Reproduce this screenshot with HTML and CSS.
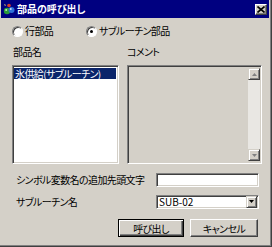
FILE: index.html
```html
<!DOCTYPE html>
<html lang="ja">
<head>
    <meta charset="UTF-8">
    <title>部品の呼び出し</title>
    <link rel="stylesheet" href="styles.css">
</head>
<body>
    <div class="window">
        <div class="caption">
            <svg class="app-icon" width="12" height="12" viewBox="0 0 12 12">
                <circle cx="4" cy="8" r="3.2" fill="#2a9a3a"/>
                <circle cx="8.5" cy="7" r="3" fill="#2e6fd8"/>
                <circle cx="6" cy="2.5" r="1.8" fill="#d83a2a"/>
                <path d="M2 1 L3 3 L1 2 Z" fill="#ffe060"/>
                <circle cx="3.2" cy="7" r="1" fill="#bff0b0"/>
                <circle cx="7.8" cy="6" r="0.9" fill="#c8e0ff"/>
            </svg>
            <span class="caption-text">部品の呼び出し</span>
            <span class="close-btn">
                <svg width="8" height="7" viewBox="0 0 8 7">
                    <path d="M0.5 0.5 L7.5 6.5 M7.5 0.5 L0.5 6.5" stroke="#000" stroke-width="1.6"/>
                </svg>
            </span>
        </div>

        <div class="content">
            <div class="radio-row">
                <label class="radio first"><span class="radio-dot"></span>行部品</label>
                <label class="radio checked"><span class="radio-dot"></span>サブルーチン部品</label>
            </div>

            <div class="panes">
                <div class="pane-label list-label">部品名</div>
                <div class="pane-label">コメント</div>
                <div class="listbox sunken">
                    <div class="list-item selected">氷供給(サブルーチン)</div>
                </div>
                <div class="memo sunken">
                    <div class="memo-area"></div>
                    <div class="vscroll">
                        <span class="sb-btn">
                            <svg width="5" height="3" viewBox="0 0 5 3"><path d="M2.5 0 L5 3 L0 3 Z" fill="#808080"/></svg>
                        </span>
                        <span class="sb-track"></span>
                        <span class="sb-btn">
                            <svg width="5" height="3" viewBox="0 0 5 3"><path d="M0 0 L5 0 L2.5 3 Z" fill="#808080"/></svg>
                        </span>
                    </div>
                </div>
            </div>

            <div class="field-row first-field">
                <span class="field-label">シンボル変数名の追加先頭文字</span>
                <div class="edit sunken"></div>
            </div>
            <div class="field-row">
                <span class="field-label">サブルーチン名</span>
                <div class="combo sunken">
                    <span class="combo-value">SUB-02</span>
                    <span class="combo-btn">
                        <svg width="5" height="3" viewBox="0 0 5 3"><path d="M0 0 L5 0 L2.5 3 Z" fill="#000"/></svg>
                    </span>
                </div>
            </div>

            <div class="button-row">
                <button type="button" class="btn default">呼び出し</button>
                <button type="button" class="btn cancel">キャンセル</button>
            </div>
        </div>
    </div>
</body>
</html>
```

FILE: styles.css
```css
* {
    box-sizing: border-box;
}
body {
    margin: 0;
    background-color: #d4d0c8;
    font-family: "Noto Sans CJK JP", "Noto Sans", sans-serif;
    font-size: 10px;
    font-feature-settings: "palt";
    color: #000;
}
.window {
    width: 272px;
    height: 247px;
    padding: 0 2px 2px 1px;
    background-color: #d4d0c8;
    border-right: 1px solid #404040;
    border-bottom: 1px solid #404040;
    box-shadow: inset -1px -1px #808080;
}
.caption {
    display: flex;
    align-items: center;
    height: 18px;
    background-color: #000080;
    color: #fff;
}
.app-icon {
    margin-left: 2px;
    flex: none;
}
.caption-text {
    margin-left: 2px;
    font-weight: bold;
    line-height: 18px;
    flex: 1;
}
.close-btn {
    display: flex;
    align-items: center;
    justify-content: center;
    width: 12px;
    height: 11px;
    margin-right: 2px;
    background-color: #d4d0c8;
    border: 1px solid;
    border-color: #fff #404040 #404040 #fff;
    box-shadow: inset -1px -1px #808080;
}
.content {
    padding-left: 11px;
    letter-spacing: -0.6px;
}
.radio-row {
    display: flex;
    height: 12px;
    margin-top: 7px;
    line-height: 12px;
}
.radio {
    display: flex;
    align-items: center;
    gap: 2px;
}
.radio.first {
    width: 74px;
}
.radio-dot {
    position: relative;
    width: 11px;
    height: 11px;
    border-radius: 50%;
    background-color: #fff;
    border: 1px solid;
    border-color: #808080 #fff #fff #808080;
    box-shadow: inset 1px 1px #404040;
}
.radio.checked .radio-dot::after {
    content: "";
    position: absolute;
    left: 3px;
    top: 3px;
    width: 3px;
    height: 3px;
    border-radius: 50%;
    background-color: #000;
}
.panes {
    display: grid;
    grid-template-columns: 107px 135px;
    grid-template-rows: 12px 99px;
    column-gap: 8px;
    row-gap: 7px;
    margin-top: 9px;
}
.pane-label {
    line-height: 12px;
}
.list-label {
    padding-left: 1px;
}
.sunken {
    border: 1px solid;
    border-color: #808080 #fff #fff #808080;
    box-shadow: inset 1px 1px #404040, inset -1px -1px #d4d0c8;
}
.listbox {
    background-color: #fff;
    padding: 2px 2px 0 1px;
}
.list-item {
    height: 11px;
    line-height: 11px;
    padding-left: 1px;
    white-space: nowrap;
}
.list-item.selected {
    background-color: #0a246a;
    color: #fff;
}
.memo {
    display: flex;
    padding: 2px 1px 2px 2px;
    background-color: #d4d0c8;
}
.memo-area {
    flex: 1;
}
.vscroll {
    display: flex;
    flex-direction: column;
    width: 12px;
}
.sb-btn {
    display: flex;
    align-items: center;
    justify-content: center;
    height: 12px;
    background-color: #d4d0c8;
    border: 1px solid;
    border-color: #d4d0c8 #404040 #404040 #d4d0c8;
    box-shadow: inset 1px 1px #fff, inset -1px -1px #808080;
}
.sb-track {
    flex: 1;
    background-color: #e9e7e3;
}
.field-row {
    display: grid;
    grid-template-columns: 144px 103px;
    align-items: center;
    height: 14px;
    margin-top: 8px;
}
.field-label {
    padding-left: 4px;
    white-space: nowrap;
}
.edit,
.combo {
    height: 14px;
    background-color: #fff;
}
.combo {
    display: flex;
    align-items: center;
    padding: 1px 1px 1px 2px;
}
.combo-value {
    flex: 1;
    line-height: 12px;
    letter-spacing: 0;
}
.combo-btn {
    display: flex;
    align-items: center;
    justify-content: center;
    width: 11px;
    height: 12px;
    background-color: #d4d0c8;
    border: 1px solid;
    border-color: #d4d0c8 #404040 #404040 #d4d0c8;
    box-shadow: inset 1px 1px #fff, inset -1px -1px #808080;
}
.button-row {
    display: flex;
    gap: 6px;
    margin-top: 11px;
    padding-left: 106px;
}
.btn {
    height: 18px;
    padding: 0;
    font-family: inherit;
    font-size: 10px;
    font-feature-settings: "palt";
    letter-spacing: -0.6px;
    color: #000;
    background-color: #d4d0c8;
    border: 1px solid;
    border-color: #fff #404040 #404040 #fff;
    box-shadow: inset -1px -1px #808080;
}
.btn.default {
    width: 66px;
    border-color: #000;
    box-shadow: inset 1px 1px #fff, inset -1px -1px #404040, inset -2px -2px #808080;
}
.btn.cancel {
    width: 68px;
}
```
